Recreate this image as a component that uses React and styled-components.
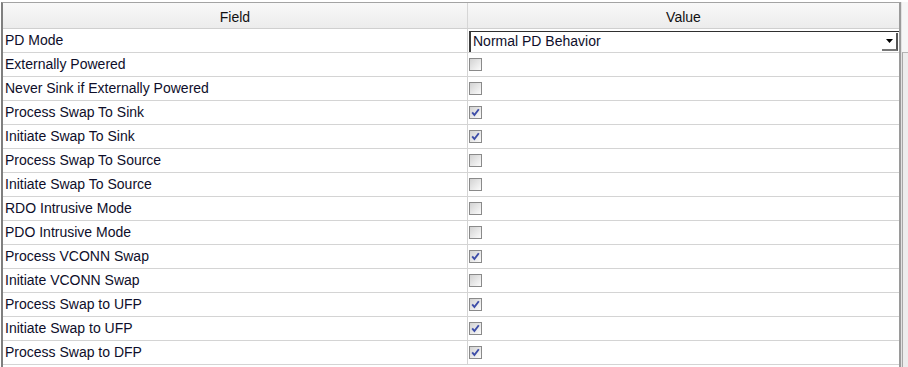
import React from 'react';
import styled, { createGlobalStyle } from 'styled-components';

const rows = [
  { field: 'PD Mode', type: 'select', value: 'Normal PD Behavior' },
  { field: 'Externally Powered', checked: false },
  { field: 'Never Sink if Externally Powered', checked: false },
  { field: 'Process Swap To Sink', checked: true },
  { field: 'Initiate Swap To Sink', checked: true },
  { field: 'Process Swap To Source', checked: false },
  { field: 'Initiate Swap To Source', checked: false },
  { field: 'RDO Intrusive Mode', checked: false },
  { field: 'PDO Intrusive Mode', checked: false },
  { field: 'Process VCONN Swap', checked: true },
  { field: 'Initiate VCONN Swap', checked: false },
  { field: 'Process Swap to UFP', checked: true },
  { field: 'Initiate Swap to UFP', checked: true },
  { field: 'Process Swap to DFP', checked: true },
];

function CheckBox({ checked }) {
  return (
    <Box>
      {checked && (
        <svg width="11" height="11" viewBox="0 0 11 11">
          <path d="M2.2 5.4 L4.4 8 L8.8 2.2" fill="none" stroke="#3d4da8" strokeWidth="1.9" />
        </svg>
      )}
    </Box>
  );
}

function Combo({ value }) {
  return (
    <ComboBox>
      <ComboText>{value}</ComboText>
      <ComboButton>
        <svg width="7" height="4" viewBox="0 0 7 4">
          <path d="M0 0 H7 L3.5 4 Z" fill="#000" />
        </svg>
      </ComboButton>
    </ComboBox>
  );
}

function App() {
  return (
    <>
      <GlobalStyle />
      <Frame>
        <TablePane>
          <HeaderRow>
            <HeaderCell>Field</HeaderCell>
            <HeaderCell last>Value</HeaderCell>
          </HeaderRow>
          {rows.map((r) => (
            <Row key={r.field}>
              <FieldCell>{r.field}</FieldCell>
              <ValueCell>
                {r.type === 'select' ? <Combo value={r.value} /> : <CheckBox checked={r.checked} />}
              </ValueCell>
            </Row>
          ))}
          <Row />
        </TablePane>
        <ScrollTrack>
          <ScrollThumb />
        </ScrollTrack>
      </Frame>
    </>
  );
}

const GlobalStyle = createGlobalStyle`
  body {
    margin: 0;
    background: #ffffff;
    font-family: 'Liberation Sans', Arial, sans-serif;
  }
`;

const Frame = styled.div`
  width: 908px;
  height: 367px;
  overflow: hidden;
  display: flex;
  padding: 2px 0 0 1px;
  box-sizing: border-box;
  background: #ffffff;
`;

const TablePane = styled.div`
  width: 900px;
  flex-shrink: 0;
  border-top: 1px solid #a3a3a3;
  border-left: 2px solid #7f7f7f;
  border-right: 2px solid #9a9a9a;
  box-sizing: border-box;
  display: flex;
  flex-direction: column;
`;

const HeaderRow = styled.div`
  display: grid;
  grid-template-columns: 465px 1fr;
  height: 25px;
  flex-shrink: 0;
  background: linear-gradient(#f8f8f8, #ececec);
  border-bottom: 1px solid #cfcfcf;
`;

const HeaderCell = styled.div`
  display: flex;
  align-items: center;
  justify-content: center;
  font-size: 14px;
  color: #111;
  padding-top: 2px;
  border-right: ${(p) => (p.last ? 'none' : '1px solid #d6d6d6')};
`;

const Row = styled.div`
  display: grid;
  grid-template-columns: 465px 1fr;
  height: 24px;
  flex-shrink: 0;
  box-sizing: border-box;
  border-bottom: 1px solid #d4d4d4;
`;

const FieldCell = styled.div`
  display: flex;
  align-items: center;
  padding: 0 0 2px 2px;
  font-size: 14px;
  color: #0e0e2a;
  border-right: 1px solid #d4d4d4;
  white-space: nowrap;
`;

const ValueCell = styled.div`
  display: flex;
  align-items: center;
  padding-left: 1px;
`;

const Box = styled.div`
  width: 13px;
  height: 13px;
  box-sizing: border-box;
  border: 1px solid #8a8a8a;
  background: linear-gradient(135deg, #d2d2d2, #fbfbfb);
  display: flex;
  align-items: center;
  justify-content: center;
  margin-top: -1px;
`;

const ComboBox = styled.div`
  width: 430px;
  height: 21px;
  box-sizing: border-box;
  display: flex;
  align-items: center;
  background: #ffffff;
  border-top: 1px solid #2f2f2f;
  border-left: 2px solid #3c3c3c;
  margin-top: 1px;
`;

const ComboText = styled.div`
  flex: 1;
  font-size: 14px;
  color: #0e0e2a;
  padding: 0 0 2px 2px;
`;

const ComboButton = styled.div`
  width: 16px;
  height: 18px;
  box-sizing: border-box;
  display: flex;
  align-items: center;
  justify-content: center;
  border-right: 2px solid #555;
  border-bottom: 2px solid #777;
  margin-right: 1px;
`;

const ScrollTrack = styled.div`
  flex: 1;
  display: flex;
  flex-direction: column;
  background: #f6f6f6;
  border-left: 1px solid #e2e2e2;
`;

const ScrollThumb = styled.div`
  margin-top: 50px;
  flex: 1;
  border-top: 1px solid #b5b5b5;
  border-left: 1px solid #a8a8a8;
  background: #ededed;
`;

export default App;
